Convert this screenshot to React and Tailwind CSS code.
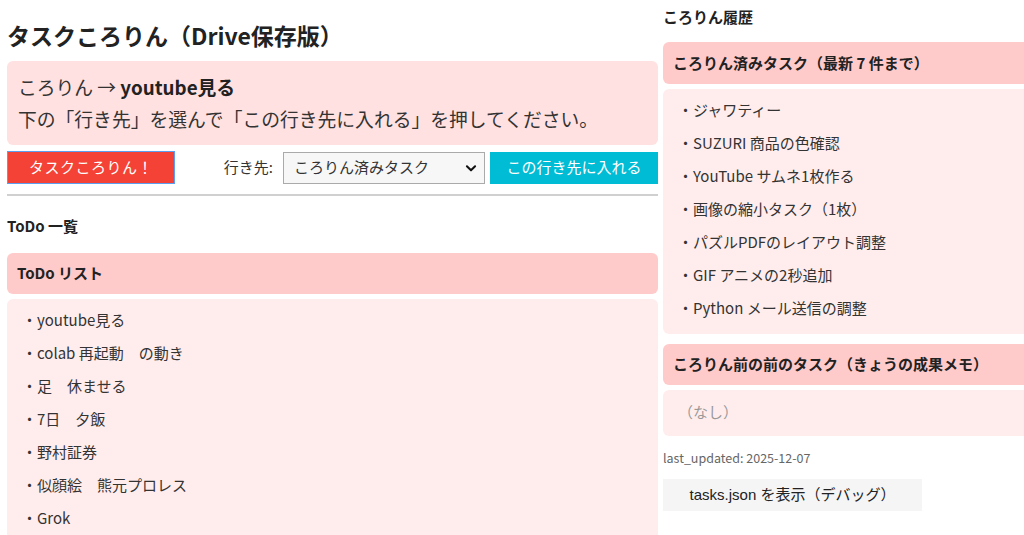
const todos = [
  "youtube見る",
  "colab 再起動　の動き",
  "足　休ませる",
  "7日　夕飯",
  "野村証券",
  "似顔絵　熊元プロレス",
  "Grok",
];

const done = [
  "ジャワティー",
  "SUZURI 商品の色確認",
  "YouTube サムネ1枚作る",
  "画像の縮小タスク（1枚）",
  "パズルPDFのレイアウト調整",
  "GIF アニメの2秒追加",
  "Python メール送信の調整",
];

const font = { fontFamily: '"Noto Sans CJK JP", "Noto Sans", sans-serif' };

function ListBox({ items, className = "" }) {
  return (
    <div className={`shrink-0 bg-[#ffeded] rounded-md pt-[5px] pb-[9px] ${className}`}>
      {items.map((t) => (
        <div key={t} className="h-[33px] flex items-center pl-[15px] text-[15px] text-[#333]">
          ・{t}
        </div>
      ))}
    </div>
  );
}

export default function App() {
  return (
    <div className="w-[1024px] h-[535px] overflow-hidden bg-white flex gap-[5px] pl-[7px] text-[#333]" style={font}>
      {/* Left */}
      <div className="w-[651px] shrink-0 flex flex-col">
        <h1 className="shrink-0 pt-[19px] h-[52px] text-[23px] leading-[32px] font-bold text-[#222]">
          タスクころりん（Drive保存版）
        </h1>
        <div className="shrink-0 mt-[9px] h-[84px] bg-[#ffe1e1] rounded-md px-[11px] py-[10px] text-[18.8px] leading-[32px]">
          <div>
            ころりん → <b className="text-[#222]">youtube見る</b>
          </div>
          <div>下の「行き先」を選んで「この行き先に入れる」を押してください。</div>
        </div>
        <div className="shrink-0 mt-[6px] flex items-center h-[33px]">
          <button className="w-[168px] h-[33px] bg-[#f44336] border border-[#5b9ff0] text-white text-[15px] tracking-[0.5px]">
            タスクころりん！
          </button>
          <span className="ml-auto mr-[10px] text-[15px]">行き先:</span>
          <div className="w-[202px] h-[32px] bg-[#f7f7f7] border border-[#aaa] flex items-center pl-[10px] pr-[6px] text-[15px] text-[#333]">
            <span className="flex-1">ころりん済みタスク</span>
            <svg width="14" height="14" viewBox="0 0 24 24" fill="none" stroke="#111" strokeWidth="3.5" strokeLinecap="round" strokeLinejoin="round">
              <path d="M5 9l7 7 7-7" />
            </svg>
          </div>
          <button className="ml-[5px] w-[168px] h-[32px] bg-[#00bcd4] text-white text-[15px]">
            この行き先に入れる
          </button>
        </div>
        <div className="shrink-0 mt-[10px] h-[2px] bg-[#d0d0d0]" />
        <div className="shrink-0 mt-[20px] text-[15px] font-bold text-[#222] leading-[20px]">ToDo 一覧</div>
        <div className="shrink-0 mt-[17px] h-[41px] bg-[#ffcaca] rounded-md flex items-center pl-[10px] text-[15px] font-bold text-[#222]">
          ToDo リスト
        </div>
        <ListBox items={todos} className="mt-[5px]" />
      </div>

      {/* Right */}
      <div className="w-[400px] shrink-0 flex flex-col">
        <div className="shrink-0 pt-[7px] text-[15px] font-bold text-[#222] leading-[20px]">ころりん履歴</div>
        <div className="shrink-0 mt-[15px] h-[42px] bg-[#ffcaca] rounded-md flex items-center pl-[10px] text-[15px] font-bold text-[#222]">
          ころりん済みタスク（最新 7 件まで）
        </div>
        <ListBox items={done} className="mt-[5px]" />
        <div className="shrink-0 mt-[10px] h-[41px] bg-[#ffcaca] rounded-md flex items-center pl-[10px] text-[15px] font-bold text-[#222]">
          ころりん前の前のタスク（きょうの成果メモ）
        </div>
        <div className="shrink-0 mt-[5px] h-[46px] bg-[#ffeded] rounded-md flex items-center pl-[15px] pb-[2px] text-[15px] text-[#999]">
          （なし）
        </div>
        <div className="shrink-0 mt-[14px] text-[12.5px] text-[#666] leading-[16px]">last_updated: 2025-12-07</div>
        <button
          className="shrink-0 mt-[13px] w-[259px] h-[32px] bg-[#f5f5f5] text-[15px] text-[#222] text-center"
          style={{ fontFamily: '"Liberation Sans", "Noto Sans CJK JP", sans-serif' }}
        >
          tasks.json を表示（デバッグ）
        </button>
      </div>
    </div>
  );
}
